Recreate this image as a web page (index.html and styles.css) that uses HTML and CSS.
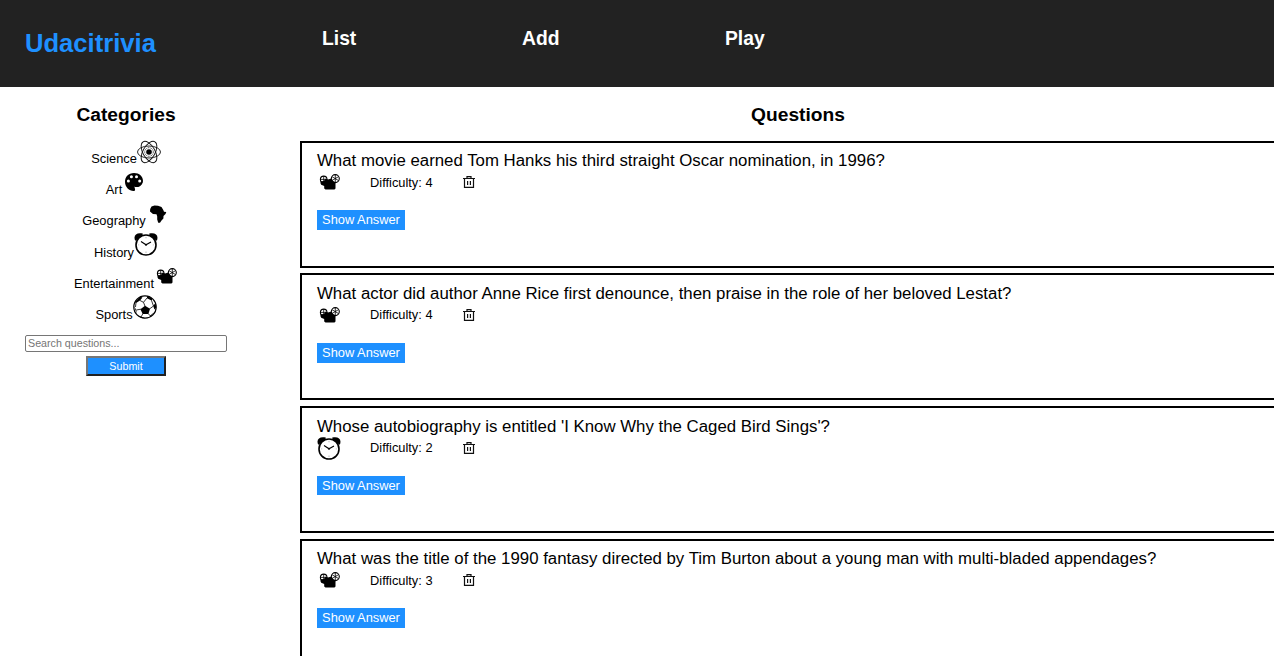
FILE: index.html
```html
<!DOCTYPE html>
<html lang="en">
<head>
<meta charset="utf-8">
<title>Udacitrivia</title>
<link rel="stylesheet" href="styles.css">
</head>
<body>
<svg class="sprite" aria-hidden="true">
  <symbol id="science" viewBox="0 0 24 24">
    <g fill="none" stroke="#111" stroke-width=".9">
      <ellipse cx="12" cy="12" rx="11.500" ry="6"/>
      <ellipse cx="12" cy="12" rx="11.800" ry="6" transform="rotate(60 12 12)"/>
      <ellipse cx="12" cy="12" rx="11.800" ry="6" transform="rotate(120 12 12)"/>
      <circle cx="12" cy="12" r="4.300" stroke-width=".8" stroke-dasharray="1 .7"/>
    </g>
    <circle cx="12" cy="12" r="2.800"/>
  </symbol>
  <symbol id="art" viewBox="0 0 24 24">
    <path d="M12 3C6.500 3 3 6.800 3 11.800C3 17.200 7.300 21 11.500 21C13.600 21 13.200 19.300 12.700 18C12.200 16.500 13 15.500 14.500 15.500C19 16.200 21 14 21 11C21 6.500 17.400 3 12 3Z"/>
    <path d="M11 14L20 13C19 17 16 17.200 13 17Z"/>
    <g fill="#fff"><circle cx="6.400" cy="11" r="1.500"/><circle cx="9.400" cy="6.800" r="1.500"/><circle cx="14.500" cy="6.800" r="1.500"/><circle cx="17.700" cy="11" r="1.500"/></g>
  </symbol>
  <symbol id="geography" viewBox="0 0 24 24">
    <path d="M5.500 4.500L8.500 3.500L12 3.800L15.500 5L17.300 8L18 9.700L20.300 10L19.500 12L17.500 14L17.400 16.500L15.500 18.500L14 20.800L12.200 20.800L11.200 17.500L11.200 14.500L10.500 12.200L7 12L4 9.600L4.200 7Z"/>
  </symbol>
  <symbol id="history" viewBox="0 0 24 24">
    <path d="M1.200 8.800C-1.200 3 3 .2 9 1.800L7.500 5Z"/>
    <path d="M22.800 8.800C25.200 3 21 .2 15 1.800L16.500 5Z"/>
    <circle cx="12" cy="13" r="10" fill="#fff" stroke="#000" stroke-width="1.600"/>
    <path d="M7 9.500L12 12.800L17 10" fill="none" stroke="#000" stroke-width="1.100"/>
    <circle cx="12" cy="12.700" r="1"/>
    <path d="M12 4.800v1.500M12 19.500v1.500M4.200 12.900h1M18.800 12.900h1" stroke="#777" stroke-width=".5"/>
  </symbol>
  <symbol id="entertainment" viewBox="0 0 24 24">
    <g fill="#fff" stroke="#000" stroke-width="1.100"><circle cx="6.700" cy="9.400" r="3.300"/><circle cx="18.300" cy="8.600" r="4"/></g>
    <path d="M3.500 9.400h6M6.700 6v6M15 6.700l6.400 3.800M15 10.500l6.400-3.800M18.300 4.700v7.500" stroke="#000" stroke-width=".8"/>
    <path d="M4 11.200L6.800 11L8.800 8.600L11 9.400L14.500 8.600L16 11L18.500 12.200V18.500L17.500 19.600H8.500L7.200 18.500V16L4.200 14.800L3.400 13Z"/>
  </symbol>
  <symbol id="sports" viewBox="0 0 24 24">
    <circle cx="12" cy="12" r="11.200" fill="#fff" stroke="#000" stroke-width="1.200"/>
    <path d="M12 10.800L17 13.800L15.400 18.900H9.700L7.400 14.200Z"/>
    <path d="M1.800 6.900L7.300 1.800L9.500 2.500L7 5.500L3 8ZM14 1L19 3.200L19 5.800L14 3.200ZM22.400 8L23.200 12.500L21.500 14.500L20.200 11ZM1 11L3.300 15L3.600 18.500ZM6.500 21L10.500 22.500L12.500 23.200L8 22.900ZM17.500 21.500L21 18L20 18.300L17 20.800Z"/>
    <path d="M7 5.500L10.500 7.300L12 11.200M10.500 7.300L14 3M18.500 5.500L20.500 11L16.400 14M7.800 14.200L3.300 15M3 7.500L2.500 12M10 18.500L8 22M15 18.500L17.500 21" fill="none" stroke="#000" stroke-width=".8"/>
  </symbol>
  <symbol id="trash" viewBox="0 0 12 12">
    <path d="M0 2.500H12M1.500 2.500V11.400H10.500V2.500M4 2.300V.6H8V2.300M4.600 5V9M7.400 5V9" fill="none" stroke="#111" stroke-width="1.200"/>
  </symbol>
</svg>

<header class="header">
  <h1 class="brand">Udacitrivia</h1>
  <nav class="nav">
    <h2 class="nav-item nav-list">List</h2>
    <h2 class="nav-item nav-add">Add</h2>
    <h2 class="nav-item">Play</h2>
  </nav>
</header>

<main class="main">
  <aside class="sidebar">
    <h2 class="heading">Categories</h2>
    <ul class="categories">
      <li class="category"><span>Science</span><svg class="icon"><use href="#science"/></svg></li>
      <li class="category"><span>Art</span><svg class="icon raised"><use href="#art"/></svg></li>
      <li class="category"><span>Geography</span><svg class="icon"><use href="#geography"/></svg></li>
      <li class="category"><span>History</span><svg class="icon raised-more"><use href="#history"/></svg></li>
      <li class="category"><span>Entertainment</span><svg class="icon raised"><use href="#entertainment"/></svg></li>
      <li class="category"><span>Sports</span><svg class="icon raised"><use href="#sports"/></svg></li>
    </ul>
    <form class="search">
      <input class="search-input" type="text" placeholder="Search questions...">
      <button class="submit" type="button">Submit</button>
    </form>
  </aside>

  <section class="questions">
    <h2 class="heading">Questions</h2>
    <article class="card">
      <div class="question">What movie earned Tom Hanks his third straight Oscar nomination, in 1996?</div>
      <div class="status"><svg class="icon"><use href="#entertainment"/></svg><span class="difficulty">Difficulty: 4</span><svg class="trash"><use href="#trash"/></svg></div>
      <button class="answer" type="button">Show Answer</button>
    </article>
    <article class="card">
      <div class="question">What actor did author Anne Rice first denounce, then praise in the role of her beloved Lestat?</div>
      <div class="status"><svg class="icon"><use href="#entertainment"/></svg><span class="difficulty">Difficulty: 4</span><svg class="trash"><use href="#trash"/></svg></div>
      <button class="answer" type="button">Show Answer</button>
    </article>
    <article class="card">
      <div class="question">Whose autobiography is entitled 'I Know Why the Caged Bird Sings'?</div>
      <div class="status"><svg class="icon"><use href="#history"/></svg><span class="difficulty">Difficulty: 2</span><svg class="trash"><use href="#trash"/></svg></div>
      <button class="answer" type="button">Show Answer</button>
    </article>
    <article class="card">
      <div class="question">What was the title of the 1990 fantasy directed by Tim Burton about a young man with multi-bladed appendages?</div>
      <div class="status"><svg class="icon"><use href="#entertainment"/></svg><span class="difficulty">Difficulty: 3</span><svg class="trash"><use href="#trash"/></svg></div>
      <button class="answer" type="button">Show Answer</button>
    </article>
  </section>
</main>
</body>
</html>
```
FILE: styles.css
```css
* { box-sizing: border-box; }
body {
  margin: 0;
  height: 656px;
  overflow: hidden;
  background: #fff;
  color: #000;
  font-family: "Liberation Sans", Arial, sans-serif;
}
h1, h2 { margin: 0; font-weight: bold; }
.sprite { display: none; }

.header {
  display: flex;
  height: 87px;
  padding-left: 25px;
  background: #222;
}
.brand {
  width: 297px;
  padding-top: 28px;
  color: #1e90ff;
  font-size: 25.600px;
  line-height: 30px;
}
.nav { display: flex; padding-top: 28px; }
.nav-item { color: #fff; font-size: 19.300px; line-height: 22px; }
.nav-list { width: 200px; }
.nav-add { width: 203px; }

.main { display: flex; height: 569px; }
.sidebar { width: 252px; flex: none; }
.heading {
  padding-top: 17px;
  height: 53.800px;
  text-align: center;
  font-size: 19.200px;
  line-height: 22px;
}
.categories { margin: -1px 0 0; padding: 0; list-style: none; }
.category {
  display: flex;
  justify-content: center;
  height: 31.300px;
  font-size: 12.850px;
  line-height: 15px;
}
.category span { padding-top: 11px; }
.icon { width: 24px; height: 24px; flex: none; }
.raised { margin-top: -1px; }
.raised-more { margin-top: -2px; }
.search {
  display: flex;
  flex-direction: column;
  align-items: center;
  gap: 4px;
  padding-top: 7.400px;
}
.search-input {
  width: 202px;
  height: 17px;
  padding: 0 2px;
  border: 1px solid #767676;
  border-radius: 2px;
  font: 10.700px/15px "Liberation Sans", Arial, sans-serif;
}
.search-input::placeholder { color: #757575; }
.submit {
  width: 80px;
  height: 20px;
  padding: 0;
  border: 2px solid;
  border-color: #767676 #212121 #212121 #767676;
  background: #1e90ff;
  color: #fff;
  font: 10.700px/16px "Liberation Sans", Arial, sans-serif;
}

.questions { width: 996px; margin-left: 48px; margin-right: -22px; flex: none; }
.card {
  height: 127px;
  margin-right: -30px;
  margin-bottom: 5.600px;
  padding: 8.600px 15px;
  border: 2px solid #000;
}
.question { font-size: 16.820px; line-height: 19px; white-space: nowrap; }
.status {
  display: flex;
  align-items: center;
  height: 24px;
  font-size: 12.850px;
}
.difficulty { width: 93px; margin-left: 29px; }
.trash { width: 12px; height: 12px; }
.answer {
  display: block;
  width: 88px;
  height: 19.600px;
  margin-top: 16px;
  padding: 0;
  border: 0;
  background: #1e90ff;
  color: #fff;
  font: 12.850px/20px "Liberation Sans", Arial, sans-serif;
}
```
